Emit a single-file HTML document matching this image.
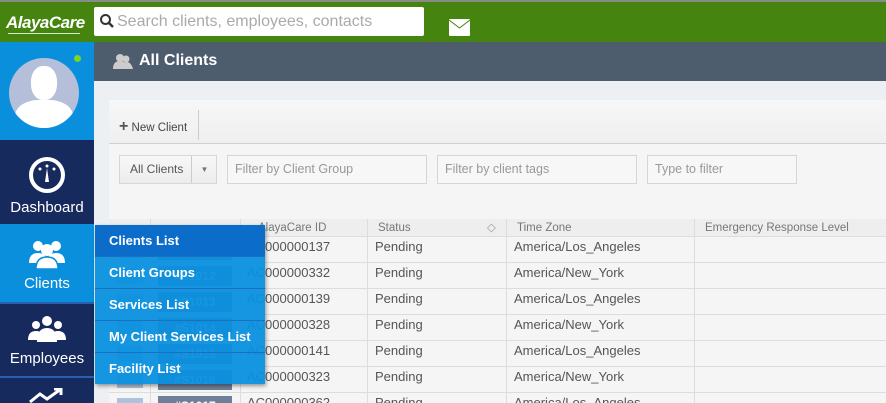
<!DOCTYPE html>
<html style="width:886px;height:403px;overflow:hidden"><head><style>
*{box-sizing:border-box;margin:0;padding:0}
body{width:886px;height:403px;overflow:hidden;position:relative;font-family:"Liberation Sans",sans-serif;background:#edf0f3}
.abs{position:absolute}
.top{left:0;top:0;width:886px;height:42px;background:#45840f;border-top:2px solid #8a8a8a}
.search{left:94px;top:7px;width:330px;height:29px;background:#fff;border-radius:2px;color:#aaa;font-size:16px;line-height:29px;padding-left:23px}
.side{left:0;top:42px;width:94px;height:361px;background:#172a5e}
.nav{left:0;width:94px;color:#fff;text-align:center;font-size:15px}
.hdr{left:94px;top:42px;width:792px;height:39px;background:#4e5d6e;color:#fff;font-weight:bold;font-size:16px;line-height:38px;padding-left:45px}
.panel{left:109px;top:100px;width:777px;height:303px;background:#f5f5f5}
.tb{left:109px;top:100px;width:777px;height:44px;background:linear-gradient(#f7f7f7,#efefef);border-bottom:1px solid #d0d0d0}
.inp{height:29px;top:155px;border:1px solid #d6d6d6;background:#f7f7f7;color:#999;font-size:12.5px;line-height:27px;padding-left:7px}
.th{top:219px;height:18px;background:#eee;border-bottom:1px solid #ddd;font-size:11.5px;color:#777;line-height:18px}
.menu{left:95px;top:225px;width:170px;height:159px;background:rgba(10,144,222,.95);box-shadow:1px 2px 4px rgba(0,0,0,.4)}
.mi{height:32px;line-height:31px;color:#fff;font-size:13px;font-weight:bold;padding-left:14px;border-bottom:1px solid #1a6fbf}
</style></head><body>
<div class="abs top"></div>
<div class="abs" style="left:6px;top:13px;color:#fff;font-size:17px;font-style:italic;font-weight:bold;letter-spacing:-0.5px">AlayaCare</div>
<div class="abs" style="left:8px;top:33px;width:72px;height:1px;background:#fff;opacity:.8"></div>
<div class="abs search">Search clients, employees, contacts</div>
<svg class="abs" style="left:99px;top:13px" width="16" height="16"><circle cx="6.5" cy="6.5" r="4.5" fill="none" stroke="#333" stroke-width="2"/><path d="M10 10l4 4" stroke="#333" stroke-width="2.5"/></svg>
<svg class="abs" style="left:449px;top:19px" width="21" height="17"><rect width="21" height="17" rx="1" fill="#fff"/><path d="M0 1l10.5 8L21 1" fill="none" stroke="#45840f" stroke-width="1"/></svg>
<div class="abs side"></div>
<div class="abs" style="left:0;top:42px;width:94px;height:98px;background:#0a8fdc"></div>
<div class="abs" style="left:9px;top:58px;width:70px;height:70px;border-radius:50%;background:#b5bfd9;overflow:hidden"><div style="position:absolute;left:22px;top:8px;width:26px;height:34px;border-radius:45%;background:#fff"></div><div style="position:absolute;left:6px;top:42px;width:58px;height:40px;border-radius:40% 40% 0 0;background:#fff"></div></div>
<div class="abs" style="left:74px;top:55px;width:7px;height:7px;border-radius:50%;background:#7fd321"></div>
<div class="abs nav" style="top:142px;height:82px;background:#172a5e"><svg style="margin-top:14px" width="38" height="38"><circle cx="19" cy="19" r="16" fill="none" stroke="#fff" stroke-width="4"/><path d="M17 26l2-14 2 14z" fill="#fff"/><circle cx="12" cy="13" r="1.5" fill="#fff"/><circle cx="19" cy="10" r="1.5" fill="#fff"/><circle cx="26" cy="13" r="1.5" fill="#fff"/></svg><div style="margin-top:1px">Dashboard</div></div>
<div class="abs nav" style="top:224px;height:78px;background:#0a8fdc"><svg style="margin-top:13px" width="40" height="32"><circle cx="11" cy="9" r="5" fill="#fff"/><circle cx="29" cy="9" r="5" fill="#fff"/><circle cx="20" cy="13" r="6" fill="#fff"/><path d="M2 26q0-10 9-10t9 10zM20 26q0-10 9-10t9 10z" fill="#fff"/><path d="M9 32q0-12 11-12t11 12z" fill="#fff" stroke="#0a8fdc" stroke-width="1.5"/></svg><div style="margin-top:2px">Clients</div></div>
<div class="abs" style="left:0;top:302px;width:94px;height:2px;background:#2a5fb0"></div>
<div class="abs nav" style="top:304px;height:72px"><svg style="margin-top:10px" width="40" height="30"><circle cx="20" cy="7" r="5" fill="#fff"/><circle cx="9" cy="11" r="4" fill="#fff"/><circle cx="31" cy="11" r="4" fill="#fff"/><path d="M1 26q0-9 8-9t8 9zM23 26q0-9 8-9t8 9zM10 28q0-14 10-14t10 14z" fill="#fff"/></svg><div style="margin-top:2px">Employees</div></div>
<div class="abs" style="left:0;top:376px;width:94px;height:2px;background:#2a5fb0"></div>
<svg class="abs" style="left:28px;top:388px" width="36" height="15"><path d="M2 14l10-8 7 5 14-10M26 1h7v6" fill="none" stroke="#fff" stroke-width="3"/></svg>
<div class="abs hdr">All Clients</div>
<svg class="abs" style="left:113px;top:53px" width="20" height="16"><circle cx="7" cy="5" r="4" fill="#ccc"/><circle cx="13" cy="6" r="3.5" fill="#ccc"/><path d="M0 16q0-8 7-8t7 8zM10 16q0-7 4-7t6 7z" fill="#ccc"/></svg>
<div class="abs panel"></div>
<div class="abs tb"></div>
<div class="abs" style="left:119px;top:118px;font-size:11.5px;color:#444"><b style="font-size:16px;color:#555">+</b> New Client</div>
<div class="abs" style="left:198px;top:110px;width:1px;height:30px;background:#ccc"></div>
<div class="abs inp" style="left:119px;width:98px;background:linear-gradient(#f8f8f8,#ececec);color:#555;font-size:12px;padding-left:10px">All Clients<span style="position:absolute;left:71px;top:0;height:27px;border-left:1px solid #ccc;width:26px;text-align:center;font-size:8px;color:#777">▼</span></div>
<div class="abs inp" style="left:227px;width:200px">Filter by Client Group</div>
<div class="abs inp" style="left:437px;width:200px">Filter by client tags</div>
<div class="abs inp" style="left:647px;width:150px">Type to filter</div>
<div class="abs th" style="left:109px;width:777px"></div>
<div class="abs th" style="left:258px;color:#777">AlayaCare ID</div>
<div class="abs th" style="left:378px">Status</div>
<div class="abs th" style="left:487px;color:#999">◇</div>
<div class="abs th" style="left:517px">Time Zone</div>
<div class="abs th" style="left:705px">Emergency Response Level</div>
<div class="abs" style="left:367px;top:219px;width:1px;height:184px;background:#ddd"></div>
<div class="abs" style="left:506px;top:219px;width:1px;height:184px;background:#ddd"></div>
<div class="abs" style="left:694px;top:219px;width:1px;height:184px;background:#ddd"></div>
<div class="abs" style="left:240px;top:219px;width:1px;height:184px;background:#ddd"></div>
<div class="abs" style="left:150px;top:219px;width:1px;height:184px;background:#ddd"></div>
<div id="rows"></div>
<script>
var d=[["0137","Los_Angeles"],["0332","New_York"],["0139","Los_Angeles"],["0328","New_York"],["0141","Los_Angeles"],["0323","New_York"],["0362","Los_Angeles"]];
var h="";d.forEach(function(r,i){var y=237+i*26;
h+='<div class="abs" style="left:109px;top:'+(y+25)+'px;width:777px;height:1px;background:#ddd"></div>';
h+='<div class="abs" style="left:117px;top:'+(y+5)+'px;width:26px;height:16px;background:#a9c4dc"></div>';
h+='<div class="abs" style="left:158px;top:'+(y+3)+'px;width:74px;height:20px;background:#6e7f99;color:#fff;font-size:12px;font-weight:bold;text-align:center;line-height:20px">#S10'+(11+i)+'</div>';
h+='<div class="abs" style="left:247px;top:'+(y+2)+'px;font-size:13px;color:#555">AC00000'+r[0]+'</div>';
h+='<div class="abs" style="left:375px;top:'+(y+2)+'px;font-size:13px;color:#555">Pending</div>';
h+='<div class="abs" style="left:514px;top:'+(y+2)+'px;font-size:13px;color:#555">America/'+r[1]+'</div>';});
document.getElementById("rows").innerHTML=h;
</script>
<div class="abs menu">
<div class="mi" style="background:#0b6cc9">Clients List</div>
<div class="mi">Client Groups</div>
<div class="mi">Services List</div>
<div class="mi">My Client Services List</div>
<div class="mi" style="border:0">Facility List</div>
</div>
</body></html>
